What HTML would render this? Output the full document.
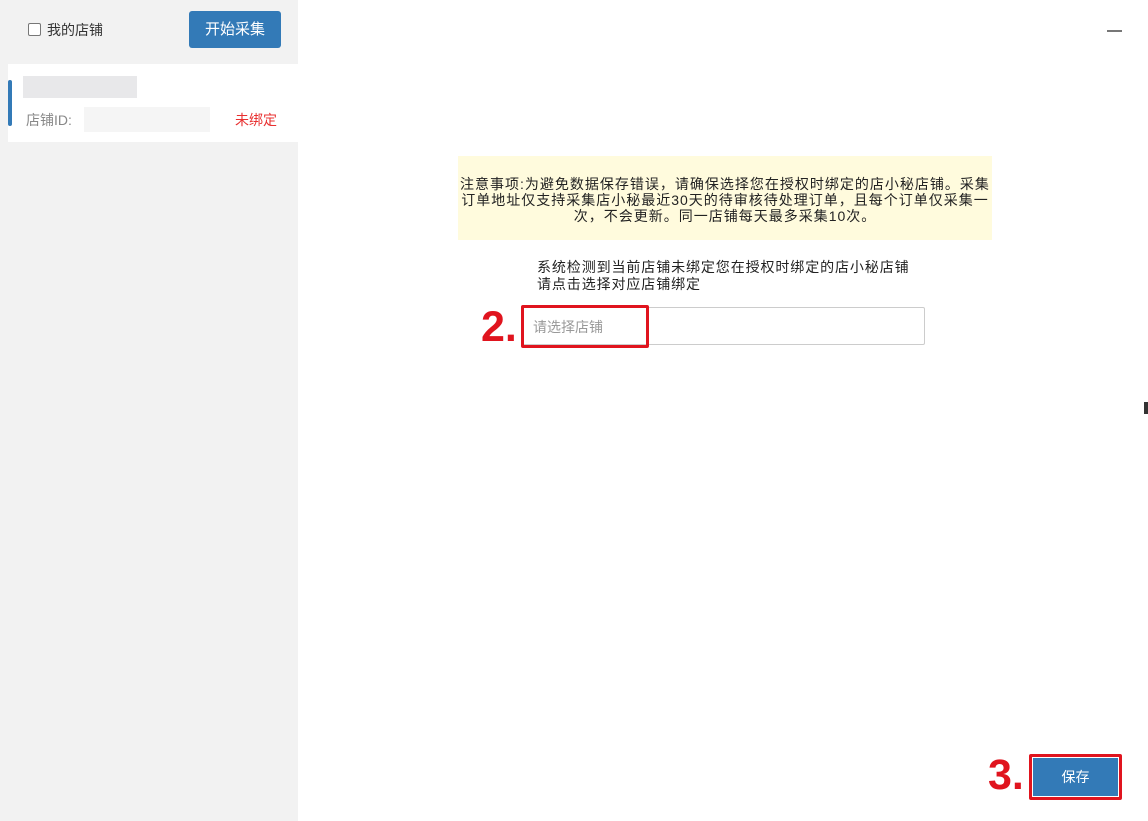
<!DOCTYPE html>
<html><head><meta charset="utf-8"><style>
*{margin:0;padding:0;box-sizing:border-box}
body{width:1148px;height:821px;background:#fff;position:relative;overflow:hidden;font-family:"Liberation Sans","Noto Sans CJK SC",sans-serif;color:#333}
.a{position:absolute}
</style></head><body>
<div class="a" style="left:0;top:0;width:298px;height:821px;background:#f2f2f2"></div>
<div class="a" style="left:28px;top:23px;width:13px;height:13px;border:1px solid #777;border-radius:2px;background:#fff"></div>
<div class="a" style="left:47px;top:20px;font-size:14px;color:#333">我的店铺</div>
<div class="a" style="left:189px;top:11px;width:92px;height:37px;background:#337ab7;border-radius:3px;color:#fff;font-size:15px;text-align:center;line-height:37px">开始采集</div>
<div class="a" style="left:8px;top:64px;width:290px;height:78px;background:#fff"></div>
<div class="a" style="left:8px;top:80px;width:4px;height:46px;background:#337ab7;border-radius:2px"></div>
<div class="a" style="left:23px;top:76px;width:114px;height:22px;background:#e8e8ea"></div>
<div class="a" style="left:26px;top:110px;font-size:14px;color:#888">店铺ID:</div>
<div class="a" style="left:84px;top:107px;width:126px;height:25px;background:#f5f5f5"></div>
<div class="a" style="left:235px;top:110px;font-size:14px;color:#e83030">未绑定</div>
<div class="a" style="left:1107px;top:30px;width:15px;height:2px;background:#777"></div>
<div class="a" style="left:458px;top:156px;width:534px;height:84px;background:#fffbdd"></div>
<div class="a" style="left:458px;top:176px;width:534px;font-size:14px;line-height:16px;text-align:center;color:#222;letter-spacing:1px;white-space:nowrap">注意事项:为避免数据保存错误，请确保选择您在授权时绑定的店小秘店铺。采集<br>订单地址仅支持采集店小秘最近30天的待审核待处理订单，且每个订单仅采集一<br>次，不会更新。同一店铺每天最多采集10次。</div>
<div class="a" style="left:537px;top:259px;font-size:14px;line-height:17px;color:#222;letter-spacing:0.9px;white-space:nowrap">系统检测到当前店铺未绑定您在授权时绑定的店小秘店铺<br>请点击选择对应店铺绑定</div>
<div class="a" style="left:521px;top:307px;width:404px;height:38px;border:1px solid #ccc;border-radius:2px"></div>
<div class="a" style="left:521px;top:305px;width:128px;height:43px;border:3px solid #e0141e;border-radius:2px"></div>
<div class="a" style="left:533px;top:317px;font-size:14px;color:#999">请选择店铺</div>
<div class="a" style="left:481px;top:303px;font-size:43px;font-weight:bold;color:#e0141e;line-height:48px">2.</div>
<div class="a" style="left:1029px;top:754px;width:93px;height:46px;border:3px solid #e0141e;border-radius:2px;background:#fff"></div>
<div class="a" style="left:1033px;top:758px;width:85px;height:38px;background:#337ab7;color:#fff;font-size:14px;text-align:center;line-height:38px">保存</div>
<div class="a" style="left:988px;top:751px;font-size:43px;font-weight:bold;color:#e0141e;line-height:48px">3.</div>
<div class="a" style="left:1144px;top:402px;width:4px;height:12px;background:#333"></div>
</body></html>
